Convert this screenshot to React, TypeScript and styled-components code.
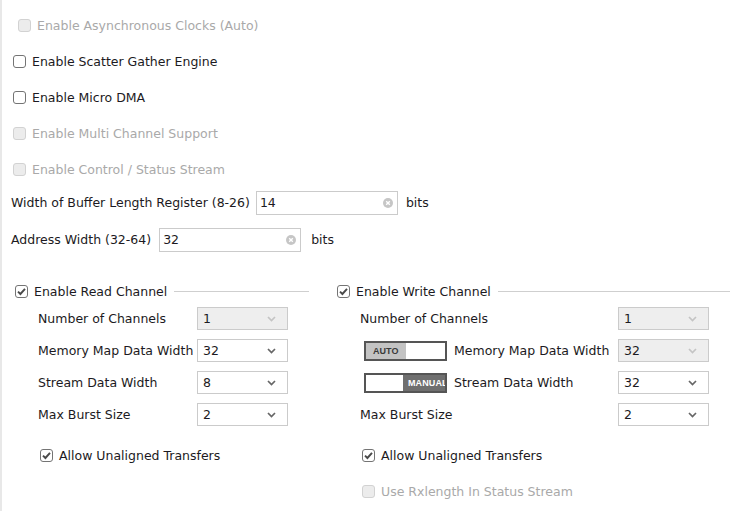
import React from 'react';
import styled, { createGlobalStyle } from 'styled-components';

const GlobalStyle = createGlobalStyle`
  body {
    margin: 0;
    background: #ffffff;
    font-family: "DejaVu Sans", Verdana, sans-serif;
  }
`;

const Page = styled.div`
  min-height: 511px;
  box-sizing: border-box;
  border-left: 2px solid #e8e8e8;
  padding: 7px 0 0 9px;
  font-size: 12.5px;
  color: #1c1a22;
`;

const CheckRow = styled.label<{ $indent?: number; $h?: number }>`
  display: flex;
  align-items: center;
  gap: 6px;
  height: ${(p) => p.$h ?? 36}px;
  padding-left: ${(p) => p.$indent ?? 2}px;
`;

const Box = styled.span<{ $disabled?: boolean }>`
  width: 13px;
  height: 13px;
  box-sizing: border-box;
  border: 1px solid ${(p) => (p.$disabled ? '#d2d2d2' : '#747474')};
  background: ${(p) => (p.$disabled ? '#ececec' : '#ffffff')};
  border-radius: 3px;
  display: flex;
  align-items: center;
  justify-content: center;
  flex-shrink: 0;
`;

const Text = styled.span<{ $disabled?: boolean }>`
  color: ${(p) => (p.$disabled ? '#a9a9a9' : '#1c1a22')};
  white-space: nowrap;
`;

const FieldRow = styled.div<{ $gap: number }>`
  display: flex;
  align-items: center;
  height: 37px;
  gap: ${(p) => p.$gap}px;
`;

const InputBox = styled.div<{ $w: number }>`
  width: ${(p) => p.$w}px;
  height: 24px;
  box-sizing: border-box;
  border: 1px solid #cbcbcb;
  display: flex;
  align-items: center;
  justify-content: space-between;
  padding: 0 4px 0 3px;
  background: #fff;
`;

const Unit = styled.span`
  margin-left: 2px;
`;

const Columns = styled.div`
  display: grid;
  grid-template-columns: 322px 393px;
  margin-top: 23px;
  padding-left: 4px;
`;

const Group = styled.div<{ $lineGap: number }>`
  display: flex;
  flex-direction: column;
  padding-right: ${(p) => p.$lineGap}px;
`;

const GroupHead = styled.div`
  display: flex;
  align-items: center;
  height: 20px;
  gap: 6px;
`;

const Rule = styled.div`
  flex: 1;
  height: 1px;
  background: #cfcfcf;
  margin-left: 1px;
`;

const ParamGrid = styled.div<{ $labelW: number }>`
  display: grid;
  grid-template-columns: ${(p) => p.$labelW}px 91px;
  grid-auto-rows: 23px;
  row-gap: 9px;
  align-items: center;
  padding-left: 23px;
  margin-top: 6px;
`;

const ParamLabel = styled.div`
  display: flex;
  align-items: center;
  white-space: nowrap;
  gap: 7px;
`;

const Select = styled.div<{ $disabled?: boolean }>`
  height: 23px;
  box-sizing: border-box;
  border: 1px solid #cbcbcb;
  background: ${(p) => (p.$disabled ? '#eeeeee' : '#ffffff')};
  display: flex;
  align-items: center;
  justify-content: space-between;
  padding: 0 11px 0 5px;
`;

const Toggle = styled.div`
  width: 83px;
  height: 20px;
  box-sizing: border-box;
  border: 2px solid #555555;
  display: flex;
  margin-left: 4px;
  flex-shrink: 0;
`;

const ToggleHalf = styled.div<{ $on: boolean; $dark?: boolean }>`
  flex: 1;
  min-width: 0;
  display: flex;
  align-items: center;
  justify-content: ${(p) => (p.$dark ? 'flex-start' : 'center')};
  padding-left: ${(p) => (p.$dark ? '5px' : '0')};
  overflow: hidden;
  white-space: nowrap;
  background: ${(p) => (p.$on ? (p.$dark ? '#6f6f6f' : '#c3c3c3') : '#ffffff')};
  color: ${(p) => (p.$dark ? '#ffffff' : '#3a3a3a')};
  font-family: "Liberation Sans", Arial, sans-serif;
  font-weight: bold;
  font-size: 9px;
  letter-spacing: 0.1px;
`;

const Footer = styled.div`
  display: flex;
  flex-direction: column;
  margin-top: 11px;
`;

const Check = ({ checked, disabled }: { checked?: boolean; disabled?: boolean }) => (
  <Box $disabled={disabled}>
    {checked && (
      <svg width="11" height="11" viewBox="0 0 11 11">
        <path d="M2 5.6 L4.4 8 L9 2.8" fill="none" stroke="#4a4a4a" strokeWidth="1.9" />
      </svg>
    )}
  </Box>
);

const ClearIcon = () => (
  <svg width="10" height="10" viewBox="0 0 10 10">
    <circle cx="5" cy="5" r="5" fill="#c6c6c6" />
    <path d="M3.2 3.2 L6.8 6.8 M6.8 3.2 L3.2 6.8" stroke="#ffffff" strokeWidth="1.4" />
  </svg>
);

const Chevron = ({ disabled }: { disabled?: boolean }) => (
  <svg width="9" height="6" viewBox="0 0 9 6">
    <path d="M1 1 L4.5 4.5 L8 1" fill="none" stroke={disabled ? '#c4c4c4' : '#666666'} strokeWidth="1.7" />
  </svg>
);

const Checkline = ({
  label,
  checked,
  disabled,
  indent,
}: {
  label: string;
  checked?: boolean;
  disabled?: boolean;
  indent?: number;
}) => (
  <CheckRow $indent={indent}>
    <Check checked={checked} disabled={disabled} />
    <Text $disabled={disabled}>{label}</Text>
  </CheckRow>
);

const Drop = ({ value, disabled }: { value: string; disabled?: boolean }) => (
  <Select $disabled={disabled}>
    <span>{value}</span>
    <Chevron disabled={disabled} />
  </Select>
);

export default function App() {
  return (
    <Page>
      <GlobalStyle />
      <Checkline label="Enable Asynchronous Clocks (Auto)" disabled indent={7} />
      <Checkline label="Enable Scatter Gather Engine" />
      <Checkline label="Enable Micro DMA" />
      <Checkline label="Enable Multi Channel Support" disabled />
      <Checkline label="Enable Control / Status Stream" disabled />

      <FieldRow $gap={6} style={{ marginTop: -3 }}>
        <Text>Width of Buffer Length Register (8-26)</Text>
        <InputBox $w={142}>
          <span>14</span>
          <ClearIcon />
        </InputBox>
        <Unit>bits</Unit>
      </FieldRow>
      <FieldRow $gap={8}>
        <Text>Address Width (32-64)</Text>
        <InputBox $w={142}>
          <span>32</span>
          <ClearIcon />
        </InputBox>
        <Unit>bits</Unit>
      </FieldRow>

      <Columns>
        <Group $lineGap={28}>
          <GroupHead>
            <Check checked />
            <Text>Enable Read Channel</Text>
            <Rule />
          </GroupHead>
          <ParamGrid $labelW={159}>
            <ParamLabel>Number of Channels</ParamLabel>
            <Drop value="1" disabled />
            <ParamLabel>Memory Map Data Width</ParamLabel>
            <Drop value="32" />
            <ParamLabel>Stream Data Width</ParamLabel>
            <Drop value="8" />
            <ParamLabel>Max Burst Size</ParamLabel>
            <Drop value="2" />
          </ParamGrid>
          <Footer>
            <Checkline label="Allow Unaligned Transfers" checked indent={25} />
          </Footer>
        </Group>

        <Group $lineGap={0}>
          <GroupHead>
            <Check checked />
            <Text>Enable Write Channel</Text>
            <Rule />
          </GroupHead>
          <ParamGrid $labelW={258}>
            <ParamLabel>Number of Channels</ParamLabel>
            <Drop value="1" disabled />
            <ParamLabel>
              <Toggle>
                <ToggleHalf $on>AUTO</ToggleHalf>
                <ToggleHalf $on={false} />
              </Toggle>
              Memory Map Data Width
            </ParamLabel>
            <Drop value="32" disabled />
            <ParamLabel>
              <Toggle>
                <ToggleHalf $on={false} />
                <ToggleHalf $on $dark>
                  MANUAL
                </ToggleHalf>
              </Toggle>
              Stream Data Width
            </ParamLabel>
            <Drop value="32" />
            <ParamLabel>Max Burst Size</ParamLabel>
            <Drop value="2" />
          </ParamGrid>
          <Footer>
            <Checkline label="Allow Unaligned Transfers" checked indent={25} />
            <Checkline label="Use Rxlength In Status Stream" disabled indent={25} />
          </Footer>
        </Group>
      </Columns>
    </Page>
  );
}
